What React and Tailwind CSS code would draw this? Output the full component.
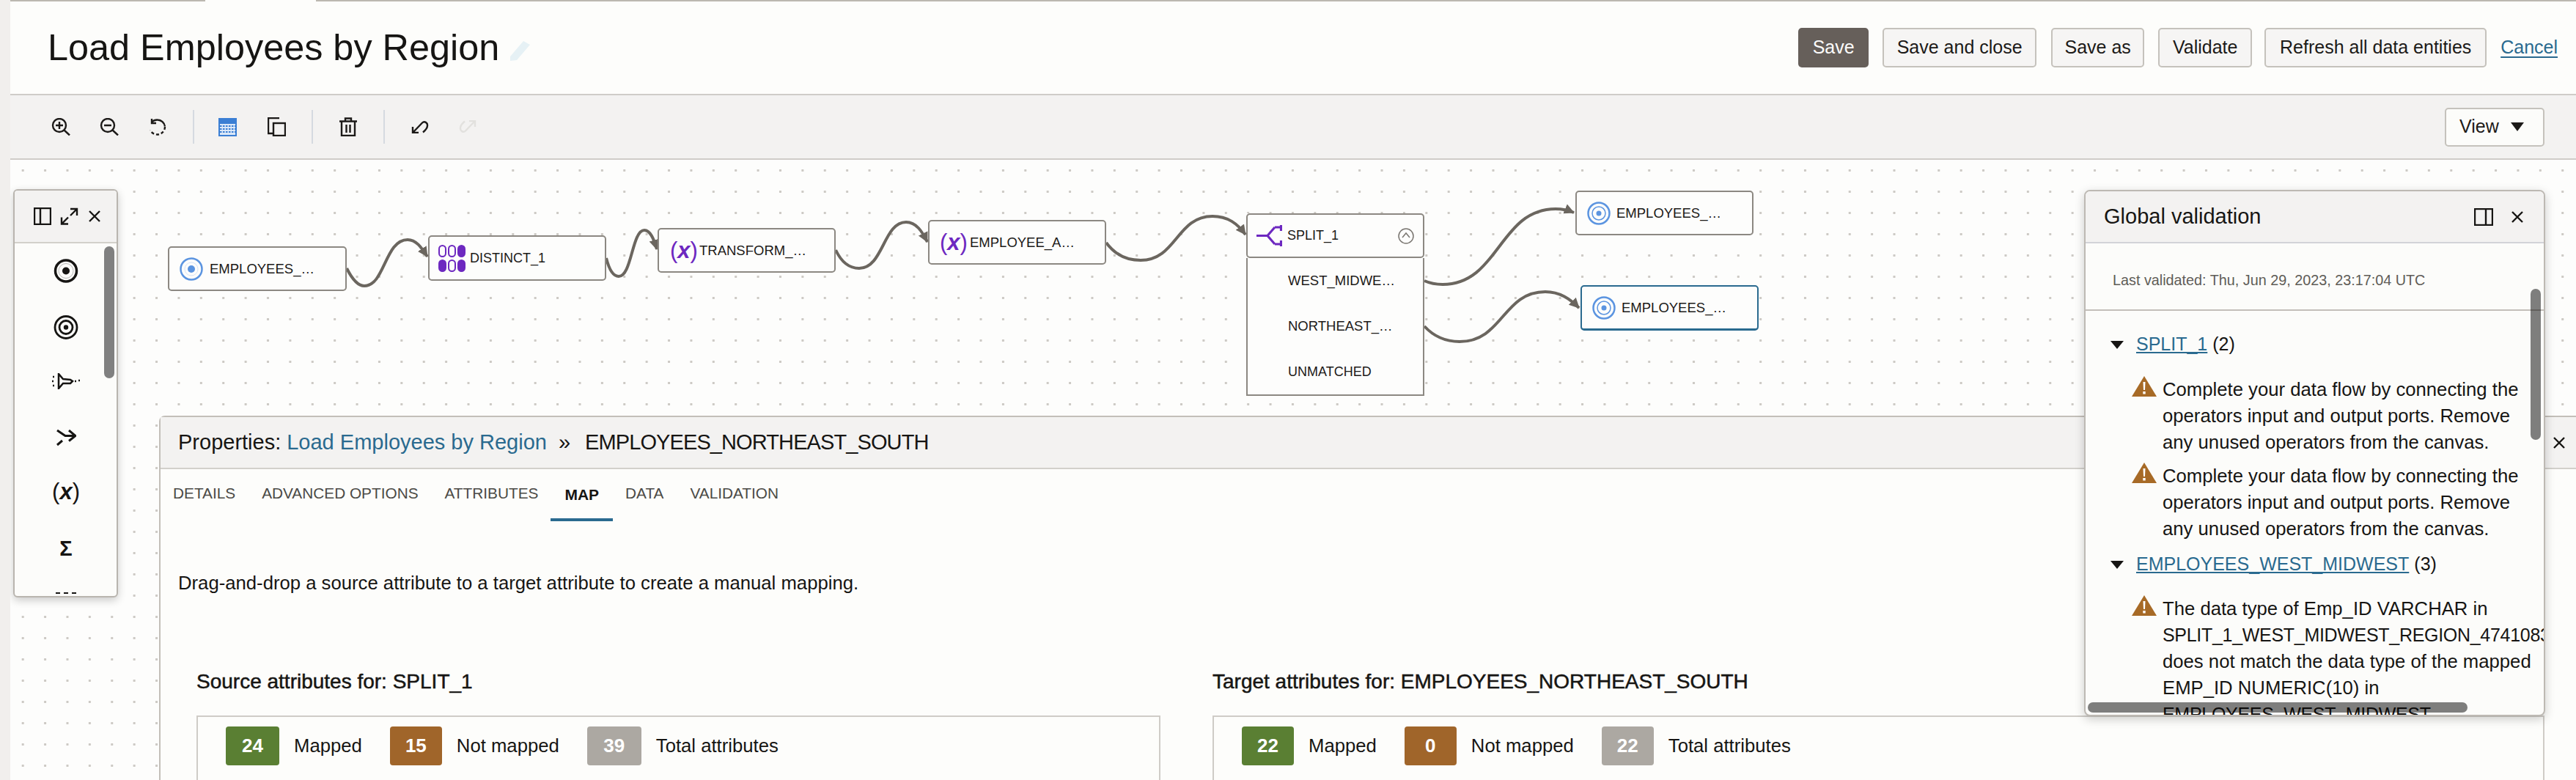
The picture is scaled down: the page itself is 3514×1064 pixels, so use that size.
import React from "react";

const Ic = ({ w, h, vb, className = "", children, sw = 2, stroke = "currentColor" }) => (
  <svg width={w} height={h} viewBox={vb || `0 0 ${w} ${h}`} fill="none" stroke={stroke} strokeWidth={sw} className={"shrink-0 " + className}>
    {children}
  </svg>
);

const ZoomI = ({ plus, className }) => (
  <Ic w={26} h={24} sw={2.4} className={className}>
    <circle cx="11" cy="10" r="9" />
    <path d="M17.5 16.5L25 23.5M6 10h10" />
    {plus && <path d="M11 5v10" />}
  </Ic>
);

const Sep = ({ className }) => <div className={"w-[2px] h-[46px] bg-[#d5dae0] " + className} />;

function Toolbar() {
  return (
    <div className="h-[88px] shrink-0 flex items-center bg-[#f3f2f1] border-b-2 border-[#cfccc8] text-[#1c1a18] pl-[56px] pr-[43px]">
      <ZoomI plus />
      <ZoomI className="ml-[40px]" />
      <Ic w={24} h={25} sw={2.4} className="ml-[41px]">
        <path d="M4 5.500A10.500 10.500 0 0 1 12 2.500a10.500 10.500 0 0 1 10 9" />
        <path d="M22 12a10.500 10.500 0 0 1-20 4.500" strokeDasharray="4 3" />
        <path d="M4 1v6h6" />
      </Ic>
      <Sep className="ml-[36px]" />
      <Ic w={25} h={25} className="ml-[33px]" stroke="#3b7fd4">
        <rect x="1" y="1" width="23" height="23" fill="#dbe8f8" />
        <rect x="1" y="1" width="23" height="6" fill="#3b7fd4" />
        <path d="M2 11h21M2 15h21M2 19h21" strokeDasharray="2.5 1.5" />
      </Ic>
      <Ic w={25} h={26} sw={2.4} className="ml-[42px]">
        <path d="M16 1H1v21h6" />
        <rect x="8" y="8" width="16" height="17" />
      </Ic>
      <Sep className="ml-[35px]" />
      <Ic w={24} h={26} sw={2.4} className="ml-[36px]">
        <path d="M8 5V1.500h8V5M0 5.500h24M3 6v19h18V6M9.500 10v11M14.500 10v11" />
      </Ic>
      <Sep className="ml-[36px]" />
      <Ic w={24} h={18} sw={2.4} className="ml-[36px]">
        <path d="M2 9v8h8M2 17L15 3.500c3-3 7.500 0 7 4 0 3-3 6.500-6 9" />
      </Ic>
      <Ic w={24} h={18} sw={2.4} className="ml-[41px] rotate-180" stroke="#e2e1de">
        <path d="M2 9v8h8M2 17L15 3.500c3-3 7.500 0 7 4 0 3-3 6.500-6 9" />
      </Ic>
      <button className="ml-auto w-[136px] h-[53px] rounded-[5px] border-2 border-[#c5c2bc] bg-[#fcfcfa] flex items-center pl-[18px] text-[25px] text-[#1c1a18]">
        View
        <svg width="18" height="12" viewBox="0 0 18 12" className="ml-[16px]"><path d="M0 0h18L9 12z" fill="#1c1a18" /></svg>
      </button>
    </div>
  );
}

const Btn = ({ className, children }) => (
  <button className={"h-[54px] rounded-[5px] border-2 border-[#c5c2bc] bg-[#f6f5f4] text-[25px] text-[#1c1a18] flex items-center justify-center " + className}>{children}</button>
);

function Header() {
  return (
    <div className="h-[128px] shrink-0 flex items-center bg-[#fdfdfb] border-b-2 border-[#cfccc8] pl-[51px] pr-[25px]">
      <h1 className="text-[50.4px] leading-[60px] text-[#161513] font-normal">Load Employees by Region</h1>
      <svg width="30" height="28" viewBox="0 0 30 28" className="ml-[15px] mt-[8px]"><path d="M0 22L18 1l9 5L9 27l-9 1z" fill="#e6f1f5" /></svg>
      <button className="ml-auto w-[96px] h-[54px] rounded-[5px] bg-[#665f5a] text-[#fcfbfa] text-[25px]">Save</button>
      <Btn className="ml-[19px] w-[210px]">Save and close</Btn>
      <Btn className="ml-[20px] w-[127px]">Save as</Btn>
      <Btn className="ml-[19px] w-[128px]">Validate</Btn>
      <Btn className="ml-[17px] w-[303px]">Refresh all data entities</Btn>
      <a className="ml-[19px] text-[25px] text-[#2a6a8f] underline underline-offset-4">Cancel</a>
    </div>
  );
}

const SourceIcon = () => (
  <Ic w={32} h={32} stroke="#5b94e0" sw={2.5}>
    <circle cx="16" cy="16" r="14.500" />
    <circle cx="16" cy="16" r="9" strokeWidth="1" stroke="#d6e4f7" />
    <circle cx="16" cy="16" r="5" fill="#5b94e0" stroke="none" />
  </Ic>
);
const TargetIcon = () => (
  <Ic w={32} h={32} stroke="#5b94e0" sw={2.5}>
    <circle cx="16" cy="16" r="14.500" />
    <circle cx="16" cy="16" r="9" strokeWidth="1.5" />
    <circle cx="16" cy="16" r="3.500" fill="#5b94e0" stroke="none" />
  </Ic>
);
const XIcon = () => (
  <span className="w-[33px] shrink-0 text-[31px] leading-[31px] text-[#6d28c0] whitespace-nowrap">(<i className="font-bold">x</i>)</span>
);
const DistinctIcon = () => (
  <Ic w={37} h={37} stroke="#6d28c0" sw={2}>
    {[[1, 1, 0], [14, 1, 0], [27, 1, 1], [1, 21, 1], [14, 21, 0], [27, 21, 1]].map(([x, y, f], i) => (
      <rect key={i} x={x} y={y} width="9" height="15" rx="4.500" fill={f ? "#6d28c0" : "none"} />
    ))}
  </Ic>
);
const SplitIcon = () => (
  <Ic w={35} h={29} stroke="#6d28c0" sw={3.2}>
    <path d="M0 14.500H15L25 3M15 14.500L25 26M33.500 0v8M33.500 21v8M25 3h9M25 26h9" />
  </Ic>
);

const Node = ({ className, icon, label, gap }) => (
  <div className={"absolute flex items-center rounded-[5px] border-2 bg-[#fdfdfc] text-[18.500px] text-[#1c1a18] whitespace-nowrap " + className}>
    {icon}
    <span className={gap}>{label}</span>
  </div>
);

function Edges() {
  return (
    <svg className="absolute inset-0 w-[3500px] h-[846px]" viewBox="14 218 3500 846" fill="none" stroke="#6b665f" strokeWidth="4">
      <defs>
        <marker id="ah" markerUnits="userSpaceOnUse" markerWidth="16" markerHeight="16" refX="13" refY="8" orient="auto">
          <path d="M0 1L14 8L0 15z" fill="#6b665f" stroke="none" />
        </marker>
      </defs>
      <path markerEnd="url(#ah)" d="M473 366C481 382 489 390 497 390C525 390 525 327 556 327C568 327 575 338 583 350" />
      <path markerEnd="url(#ah)" d="M827 352C831 368 836 377 844 377C862 377 862 314 879 314C887 314 892 326 896 340" />
      <path markerEnd="url(#ah)" d="M1140 341C1148 358 1158 366 1172 366C1205 366 1205 303 1236 303C1250 303 1258 316 1265 330" />
      <path markerEnd="url(#ah)" d="M1509 331C1520 346 1535 355 1556 355C1605 355 1605 295 1654 295C1675 295 1688 305 1699 320" />
      <path markerEnd="url(#ah)" d="M1943 383C1952 387 1960 388 1968 388C2045 388 2045 285 2122 285C2132 285 2140 287 2147 290" />
      <path markerEnd="url(#ah)" d="M1943 445C1955 458 1970 466 1991 466C2050 466 2050 398 2108 398C2128 398 2142 408 2154 420" />
    </svg>
  );
}

function Palette() {
  return (
    <div className="absolute left-[4px] top-[40px] w-[143px] h-[557px] rounded-[6px] border-2 border-[#b9b5af] bg-[#fcfcfa] shadow-[0_4px_12px_rgba(0,0,0,0.2)] overflow-hidden text-[#161513]">
      <div className="h-[72px] flex items-center bg-[#f3f2f1] border-b-2 border-[#d2d0cb] pl-[26px]">
        <Ic w={24} h={24} sw={2.4}><rect x="1" y="1" width="22" height="22" /><path d="M9 1v22" /></Ic>
        <Ic w={25} h={24} sw={2.4} className="ml-[12px]"><path d="M14 2h9v9M23 2L14 11M11 22.500H2v-9M2 22.500L11 13.500" /></Ic>
        <Ic w={16} h={16} sw={2.4} className="ml-[14px]"><path d="M1 1l14 14M15 1L1 15" /></Ic>
      </div>
      <div className="absolute left-[122px] top-[76px] w-[14px] h-[180px] rounded-[7px] bg-[#808080]" />
      <div className="w-[140px] flex flex-col items-center">
        <div className="h-[33px] mt-[21px] flex items-center">
          <Ic w={34} h={33} sw={3.500}><circle cx="17" cy="16.500" r="14.500" /><circle cx="17" cy="16.500" r="10" strokeWidth="0.7" stroke="#999" /><circle cx="17" cy="16.500" r="5" fill="currentColor" stroke="none" /></Ic>
        </div>
        <div className="h-[33px] mt-[44px] flex items-center">
          <Ic w={34} h={33} sw={2.800}><circle cx="17" cy="16.500" r="15" /><circle cx="17" cy="16.500" r="9" /><circle cx="17" cy="16.500" r="3.200" fill="currentColor" stroke="none" /></Ic>
        </div>
        <div className="h-[22px] mt-[46px] flex items-center">
          <Ic w={38} h={22} sw={2.500}>
            <path d="M9 1v20l6-7h10l3-3-3-2-10-1z" />
            <path d="M1 5h2M0 11h3M1 17h2" strokeDasharray="2 1" />
            <path d="M31 11h2M36 10h2" />
          </Ic>
        </div>
        <div className="h-[24px] mt-[54px] flex items-center">
          <Ic w={27} h={23} sw={3}><path d="M1 1l11 7.500h14M17 1l9 7.500-9 7M1 21l7-6" /></Ic>
        </div>
        <div className="h-[36px] mt-[44px] flex items-center text-[31px] leading-[36px] whitespace-nowrap">(<i className="font-bold">x</i>)</div>
        <div className="h-[30px] mt-[44px] flex items-center text-[29px] leading-[30px] font-bold">Σ</div>
        <Ic w={30} h={2} className="mt-[45px]"><path d="M1 1h28" strokeDasharray="6 5" /></Ic>
      </div>
    </div>
  );
}

const Warn = () => (
  <svg width="34" height="28" viewBox="0 0 34 28" className="shrink-0">
    <path d="M17 0L34 28H0z" fill="#a76a26" />
    <path d="M15.500 8h3l-.5 11h-2zM15.300 21h3.400v3.500h-3.400z" fill="#fff" />
  </svg>
);
const Tri = () => (
  <svg width="18" height="11" viewBox="0 0 18 11" className="shrink-0"><path d="M0 0h18L9 11z" fill="#161513" /></svg>
);

const Group = ({ className, name, count }) => (
  <div className={"flex items-center pl-[34px] h-[36px] " + className}>
    <Tri />
    <a className="ml-[17px] text-[25px] text-[#2a6a8f] underline underline-offset-2 decoration-2">{name}</a>
    <span className="ml-[7px] text-[25px]">({count})</span>
  </div>
);

const Msg = ({ className, lines }) => (
  <div className={"flex pl-[63px] " + className}>
    <Warn />
    <div className="ml-[8px]">
      {lines.map((l) => (
        <div key={l} className={"whitespace-nowrap h-[36px] leading-[36px] " + (l === l.toUpperCase() ? "text-[25px] tracking-[-0.3px]" : "")}>{l}</div>
      ))}
    </div>
  </div>
);

const msg1 = [
  "Complete your data flow by connecting the",
  "operators input and output ports. Remove",
  "any unused operators from the canvas.",
];

function GlobalPanel() {
  return (
    <div className="absolute left-[2829px] top-[41px] w-[629px] h-[718px] rounded-[8px] border-2 border-[#bdb9b3] bg-[#fcfcfa] shadow-[0_4px_14px_rgba(0,0,0,0.2)] overflow-hidden text-[#161513]">
      <div className="h-[71px] flex items-center bg-[#f3f2f1] border-b-2 border-[#d2d3d8] pl-[25px] pr-[28px]">
        <span className="text-[29px]">Global validation</span>
        <Ic w={26} h={24} sw={2.4} className="ml-auto"><rect x="1" y="1" width="24" height="22" /><path d="M16 1v22" /></Ic>
        <Ic w={16} h={16} sw={2.4} className="ml-[25px]"><path d="M1 1l14 14M15 1L1 15" /></Ic>
      </div>
      <div className="h-[92px] flex items-center pl-[37px] pt-[12px] border-b-2 border-[#c3bfb9] text-[19.800px] text-[#5f5c57]">
        Last validated: Thu, Jun 29, 2023, 23:17:04 UTC
      </div>
      <div className="text-[25.700px]">
        <Group className="mt-[28px]" name="SPLIT_1" count="2" />
        <Msg className="mt-[25px]" lines={msg1} />
        <Msg className="mt-[10px]" lines={msg1} />
        <Group className="mt-[13px]" name="EMPLOYEES_WEST_MIDWEST" count="3" />
        <Msg
          className="mt-[24px]"
          lines={[
            "The data type of Emp_ID VARCHAR in",
            "SPLIT_1_WEST_MIDWEST_REGION_47410831",
            "does not match the data type of the mapped",
            "EMP_ID NUMERIC(10) in",
            "EMPLOYEES_WEST_MIDWEST",
          ]}
        />
      </div>
      <div className="absolute left-[607px] top-[133px] w-[14px] h-[206px] rounded-[7px] bg-black/50" />
      <div className="absolute left-[3px] top-[697px] w-[518px] h-[14px] rounded-[7px] bg-black/50" />
    </div>
  );
}

const Stat = ({ w, bg, n, label }) => (
  <div className="flex items-center gap-[20px]">
    <div className={"h-[53px] rounded-[4px] flex items-center justify-center text-white text-[26px] font-bold " + w + " " + bg}>{n}</div>
    <span className="text-[25.700px] text-[#161513]">{label}</span>
  </div>
);

function Properties() {
  return (
    <div className="absolute left-[203px] top-[349px] w-[3297px] h-[497px] rounded-tl-[8px] border-l-2 border-t-2 border-[#c3bfb9] bg-[#fdfdfb] flex flex-col text-[#161513]">
      <div className="h-[71px] shrink-0 flex items-center bg-[#f3f2f1] border-b-2 border-[#d2d0cb] pl-[24px] pr-[15px] text-[29px] whitespace-nowrap">
        <span>Properties:</span>
        <a className="ml-[8px] text-[#2a6a8f]">Load Employees by Region</a>
        <span className="ml-[16px]">»</span>
        <span className="ml-[20px] tracking-[-0.9px]">EMPLOYEES_NORTHEAST_SOUTH</span>
        <Ic w={16} h={16} sw={2.4} className="ml-auto"><path d="M1 1l14 14M15 1L1 15" /></Ic>
      </div>
      <div className="h-[71px] shrink-0 flex items-start gap-[36px] pl-[17px] pt-[21px] text-[20.800px] leading-[24px] text-[#4b4a46] whitespace-nowrap">
        <span>DETAILS</span>
        <span>ADVANCED OPTIONS</span>
        <span>ATTRIBUTES</span>
        <span className="relative font-bold text-[21px] text-[#161513] mt-[2px]">
          MAP
          <span className="absolute left-[-19px] right-[-19px] top-[44px] h-[4px] bg-[#2a6a8f]" />
        </span>
        <span>DATA</span>
        <span>VALIDATION</span>
      </div>
      <p className="mt-[69px] pl-[24px] text-[25.700px] leading-[30px]">Drag-and-drop a source attribute to a target attribute to create a manual mapping.</p>
      <div className="mt-[104px] pl-[49px] pr-[41px] grid grid-cols-[1315px_1817px] gap-x-[71px] flex-1 min-h-0">
        <div className="flex flex-col">
          <h3 className="text-[28px] leading-[32px] font-normal [-webkit-text-stroke:0.5px_#161513]">Source attributes for: SPLIT_1</h3>
          <div className="mt-[30px] flex-1 border-2 border-b-0 border-[#cfccc7] pl-[38px] pt-[13px]">
            <div className="flex items-center gap-[38px]">
              <Stat w="w-[73px]" bg="bg-[#5a7f33]" n="24" label="Mapped" />
              <Stat w="w-[71px]" bg="bg-[#a0652a]" n="15" label="Not mapped" />
              <Stat w="w-[74px]" bg="bg-[#aca8a2]" n="39" label="Total attributes" />
            </div>
          </div>
        </div>
        <div className="flex flex-col">
          <h3 className="text-[28px] leading-[32px] font-normal [-webkit-text-stroke:0.5px_#161513]">Target attributes for: EMPLOYEES_NORTHEAST_SOUTH</h3>
          <div className="mt-[30px] flex-1 border-2 border-b-0 border-[#cfccc7] pl-[38px] pt-[13px]">
            <div className="flex items-center gap-[38px]">
              <Stat w="w-[71px]" bg="bg-[#5a7f33]" n="22" label="Mapped" />
              <Stat w="w-[71px]" bg="bg-[#a0652a]" n="0" label="Not mapped" />
              <Stat w="w-[71px]" bg="bg-[#aca8a2]" n="22" label="Total attributes" />
            </div>
          </div>
        </div>
      </div>
    </div>
  );
}

function Canvas() {
  const nb = "border-[#8c8882] ";
  return (
    <div className="relative flex-1 min-h-0 overflow-hidden bg-[#fdfdfc] bg-[radial-gradient(circle,#cdcac5_1.6px,transparent_2px)] bg-[length:30.4px_29px] bg-[position:2px_0px]">
      <Edges />
      <Node className={nb + "left-[215px] top-[118px] w-[244px] h-[61px] pl-[14px]"} icon={<SourceIcon />} gap="ml-[9px]" label="EMPLOYEES_…" />
      <Node className={nb + "left-[570px] top-[103px] w-[243px] h-[62px] pl-[12px]"} icon={<DistinctIcon />} gap="ml-[6px] text-[18px]" label="DISTINCT_1" />
      <Node className={nb + "left-[883px] top-[93px] w-[243px] h-[61px] pl-[15px]"} icon={<XIcon />} gap="ml-[7px]" label="TRANSFORM_…" />
      <Node className={nb + "left-[1252px] top-[82px] w-[243px] h-[61px] pl-[14px]"} icon={<XIcon />} gap="ml-[8px]" label="EMPLOYEE_A…" />
      <div className="absolute left-[1686px] top-[73px] w-[243px] h-[248px] flex flex-col text-[18px] text-[#1c1a18] bg-[#fdfdfc]">
        <div className="h-[61px] shrink-0 flex items-center rounded-[5px] border-2 border-[#8c8882] pl-[12px] pr-[12px]">
          <SplitIcon />
          <span className="ml-[7px]">SPLIT_1</span>
          <Ic w={22} h={22} className="ml-auto" stroke="#7a7671" sw={1.500}>
            <circle cx="11" cy="11" r="10" />
            <path d="M6 13l5-6 5 6" />
          </Ic>
        </div>
        <div className="flex-1 border-2 border-t-0 border-[#8c8882] pl-[55px] flex flex-col text-[18.500px] whitespace-nowrap">
          <div className="h-[62px] flex items-center">WEST_MIDWE…</div>
          <div className="h-[62px] flex items-center">NORTHEAST_…</div>
          <div className="h-[62px] flex items-center text-[18px]">UNMATCHED</div>
        </div>
      </div>
      <Node className={nb + "left-[2135px] top-[42px] w-[243px] h-[61px] pl-[14px]"} icon={<TargetIcon />} gap="ml-[8px]" label="EMPLOYEES_…" />
      <Node className="border-[#2a6a8f] border-b-[3px] left-[2142px] top-[171px] w-[243px] h-[62px] pl-[14px]" icon={<TargetIcon />} gap="ml-[8px]" label="EMPLOYEES_…" />
      <Palette />
      <Properties />
      <GlobalPanel />
    </div>
  );
}

export default function App() {
  return (
    <div className="w-[3514px] h-[1064px] flex overflow-hidden font-['Liberation_Sans',Arial,sans-serif] bg-[#f1efed]">
      <div className="w-[14px] shrink-0" />
      <div className="flex-1 flex flex-col min-w-0">
        <div className="h-[2px] shrink-0 flex">
          <div className="w-[266px] bg-[#bcb8b0]" />
          <div className="w-[151px] bg-[#fdfdfb]" />
          <div className="flex-1 bg-[#bcb8b0]" />
        </div>
        <Header />
        <Toolbar />
        <Canvas />
      </div>
    </div>
  );
}
